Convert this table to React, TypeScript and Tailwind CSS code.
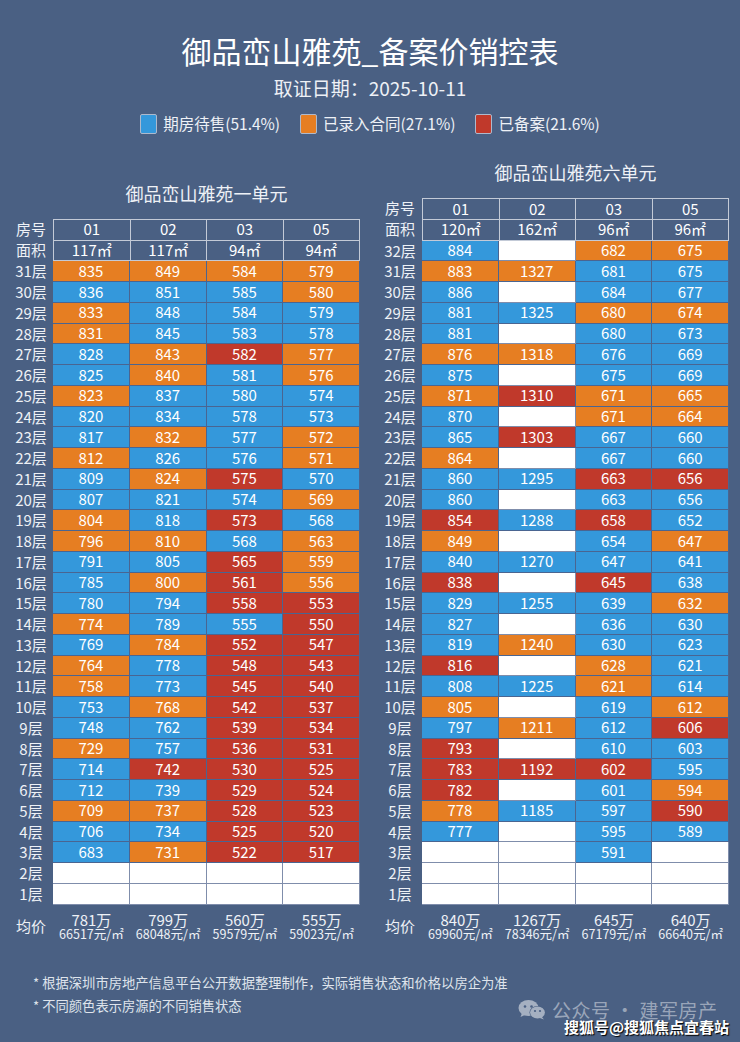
import React from 'react';

type Unit = {
  title: string;
  rooms: string[];
  areas: string[];
  topFloor: number;
  rows: string[];
  avg: [string, string][];
};

const left: Unit = {
  title: '御品峦山雅苑一单元',
  rooms: ['01', '02', '03', '05'],
  areas: ['117㎡', '117㎡', '94㎡', '94㎡'],
  topFloor: 31,
  rows: [
    '835O 849O 584O 579O',
    '836B 851B 585B 580O',
    '833O 848B 584B 579B',
    '831O 845B 583B 578B',
    '828B 843O 582R 577O',
    '825B 840O 581B 576O',
    '823O 837B 580B 574B',
    '820B 834B 578B 573B',
    '817B 832O 577B 572O',
    '812O 826B 576B 571O',
    '809B 824O 575R 570B',
    '807B 821B 574B 569O',
    '804O 818B 573R 568B',
    '796O 810O 568B 563O',
    '791B 805B 565R 559O',
    '785B 800O 561R 556O',
    '780B 794B 558R 553R',
    '774O 789B 555B 550R',
    '769B 784O 552R 547R',
    '764O 778B 548R 543R',
    '758O 773B 545R 540R',
    '753B 768O 542R 537R',
    '748B 762B 539R 534R',
    '729O 757B 536R 531R',
    '714B 742R 530R 525R',
    '712B 739B 529R 524R',
    '709O 737O 528R 523R',
    '706B 734B 525R 520R',
    '683B 731O 522R 517R',
    'W W W W',
    'W W W W',
  ],
  avg: [
    ['781万', '66517元/㎡'],
    ['799万', '68048元/㎡'],
    ['560万', '59579元/㎡'],
    ['555万', '59023元/㎡'],
  ],
};

const right: Unit = {
  title: '御品峦山雅苑六单元',
  rooms: ['01', '02', '03', '05'],
  areas: ['120㎡', '162㎡', '96㎡', '96㎡'],
  topFloor: 32,
  rows: [
    '884B W 682O 675O',
    '883O 1327O 681B 675B',
    '886B W 684B 677B',
    '881B 1325B 680O 674O',
    '881B W 680B 673B',
    '876O 1318O 676B 669B',
    '875B W 675B 669B',
    '871O 1310R 671O 665O',
    '870B W 671O 664O',
    '865B 1303R 667B 660B',
    '864O W 667B 660B',
    '860B 1295B 663R 656R',
    '860B W 663B 656B',
    '854R 1288B 658R 652B',
    '849O W 654B 647O',
    '840B 1270B 647B 641B',
    '838R W 645R 638B',
    '829B 1255B 639B 632O',
    '827B W 636B 630B',
    '819B 1240O 630B 623B',
    '816R W 628O 621B',
    '808B 1225B 621O 614B',
    '805O W 619B 612O',
    '797B 1211O 612B 606R',
    '793R W 610B 603B',
    '783R 1192R 602R 595B',
    '782R W 601B 594O',
    '778O 1185B 597B 590R',
    '777B W 595B 589B',
    'W W 591B W',
    'W W W W',
    'W W W W',
  ],
  avg: [
    ['840万', '69960元/㎡'],
    ['1267万', '78346元/㎡'],
    ['645万', '67179元/㎡'],
    ['640万', '66640元/㎡'],
  ],
};

const cellBg: Record<string, string> = {
  B: 'bg-[#3498db] border-[#4a6591]',
  O: 'bg-[#e67e22] border-[#4a6591]',
  R: 'bg-[#c0392b] border-[#4a6591]',
  W: 'bg-white border-[#7f8dab]',
};

function parse(tok: string): { v: string; c: string } {
  if (tok === 'W') return { v: '', c: 'W' };
  return { v: tok.slice(0, -1), c: tok.slice(-1) };
}

function UnitTable({ u }: { u: Unit }) {
  return (
    <div className="flex flex-col w-[351px]">
      <div className="ml-[44px] w-[307px] text-center text-[18px] leading-[26px] text-[#eef1f6] mb-[13px]">
        {u.title}
      </div>
      <div className="flex">
        <div className="w-[44px] flex flex-col text-[15px] text-[#eef1f6]">
          <div className="h-[20.75px] flex items-center justify-center">房号</div>
          <div className="h-[20.75px] flex items-center justify-center">面积</div>
        </div>
        <div className="w-[307px] border-t border-l border-[#c3cad7]">
          <div className="grid grid-cols-4">
            {u.rooms.map((r, i) => (
              <div
                key={i}
                className="h-[20.75px] border-r border-b border-[#c3cad7] flex items-center justify-center text-[15px] text-white"
              >
                {r}
              </div>
            ))}
          </div>
          <div className="grid grid-cols-4">
            {u.areas.map((r, i) => (
              <div
                key={i}
                className="h-[20.75px] border-r border-b border-[#c3cad7] flex items-center justify-center text-[15px] text-white"
              >
                {r}
              </div>
            ))}
          </div>
        </div>
      </div>
      {u.rows.map((row, ri) => {
        const floor = u.topFloor - ri;
        const cells = row.split(' ').map(parse);
        return (
          <div key={ri} className="flex">
            <div className="w-[44px] h-[20.75px] flex items-center justify-center text-[15px] text-[#eef1f6]">
              {floor}层
            </div>
            <div className="w-[307px] grid grid-cols-4">
              {cells.map((c, ci) => (
                <div
                  key={ci}
                  className={`h-[20.75px] border-r border-b flex items-center justify-center text-[15px] text-white ${cellBg[c.c]}`}
                >
                  {c.v}
                </div>
              ))}
            </div>
          </div>
        );
      })}
    </div>
  );
}

function AvgRow({ u }: { u: Unit }) {
  return (
    <div className="flex w-[351px] text-[#eef1f6]">
      <div className="w-[44px] flex items-center justify-center text-[15px]">均价</div>
      <div className="w-[307px] grid grid-cols-4">
        {u.avg.map(([a, b], i) => (
          <div key={i} className="flex flex-col items-center">
            <div className="text-[15px] leading-[16px]">{a}</div>
            <div className="text-[12.5px] leading-[12px]">{b}</div>
          </div>
        ))}
      </div>
    </div>
  );
}

function LegendItem({ color, label }: { color: string; label: string }) {
  return (
    <div className="flex items-center gap-[6px]">
      <div className={`w-[17px] h-[20px] rounded-[2px] border border-[#aeb9cc] ${color}`} />
      <span className="text-[15.5px] text-[#eef1f6]">{label}</span>
    </div>
  );
}

function WeChatIcon() {
  return (
    <svg width="28" height="20" viewBox="0 0 28 20" className="opacity-50">
      <ellipse cx="10.5" cy="8" rx="10" ry="8" fill="#ffffff" />
      <path d="M4 13 L2.5 17 L8 14.5 Z" fill="#ffffff" />
      <circle cx="7" cy="6.5" r="1.3" fill="#4a6083" />
      <circle cx="13.5" cy="6.5" r="1.3" fill="#4a6083" />
      <ellipse cx="19.5" cy="12.5" rx="8" ry="6.6" fill="#4a6083" />
      <ellipse cx="19.5" cy="12.5" rx="7.4" ry="6" fill="#ffffff" />
      <path d="M23.5 16.5 L26 19.5 L21 17.8 Z" fill="#ffffff" />
      <circle cx="17" cy="11" r="1.1" fill="#4a6083" />
      <circle cx="22" cy="11" r="1.1" fill="#4a6083" />
    </svg>
  );
}

export default function App() {
  return (
    <div className="relative w-[740px] h-[1042px] overflow-hidden bg-[#4a6083] font-['Noto_Sans_CJK_SC','Noto_Sans',sans-serif] text-white">
      <div className="pt-[30px] text-center text-[30px] leading-[40px] text-white">
        御品峦山雅苑_备案价销控表
      </div>
      <div className="mt-[5px] text-center text-[19px] leading-[26px] text-[#eef1f6]">
        取证日期：2025-10-11
      </div>
      <div className="mt-[12px] h-[22px] flex justify-center gap-[20px]">
        <LegendItem color="bg-[#3498db]" label="期房待售(51.4%)" />
        <LegendItem color="bg-[#e67e22]" label="已录入合同(27.1%)" />
        <LegendItem color="bg-[#c0392b]" label="已备案(21.6%)" />
      </div>
      <div className="mt-[24px] pl-[9px] flex items-end gap-[18px]">
        <UnitTable u={left} />
        <UnitTable u={right} />
      </div>
      <div className="mt-[7.5px] pl-[9px] flex gap-[18px]">
        <AvgRow u={left} />
        <AvgRow u={right} />
      </div>
      <div className="mt-[31px] pl-[33px] text-[13.3px] leading-[23px] text-[#dfe4ec]">
        <div>* 根据深圳市房地产信息平台公开数据整理制作，实际销售状态和价格以房企为准</div>
        <div>* 不同颜色表示房源的不同销售状态</div>
      </div>
      <div className="absolute left-[518px] top-[998px] flex items-center gap-[6px]">
        <WeChatIcon />
        <span className="text-[19px] leading-[24px] text-white/45 tracking-[0.5px]">公众号 · 建军房产</span>
      </div>
      <div className="absolute left-[564px] top-[1017px] text-[15px] leading-[20px] font-bold text-white [text-shadow:1px_1px_1px_#000]">
        搜狐号@搜狐焦点宜春站
      </div>
    </div>
  );
}
